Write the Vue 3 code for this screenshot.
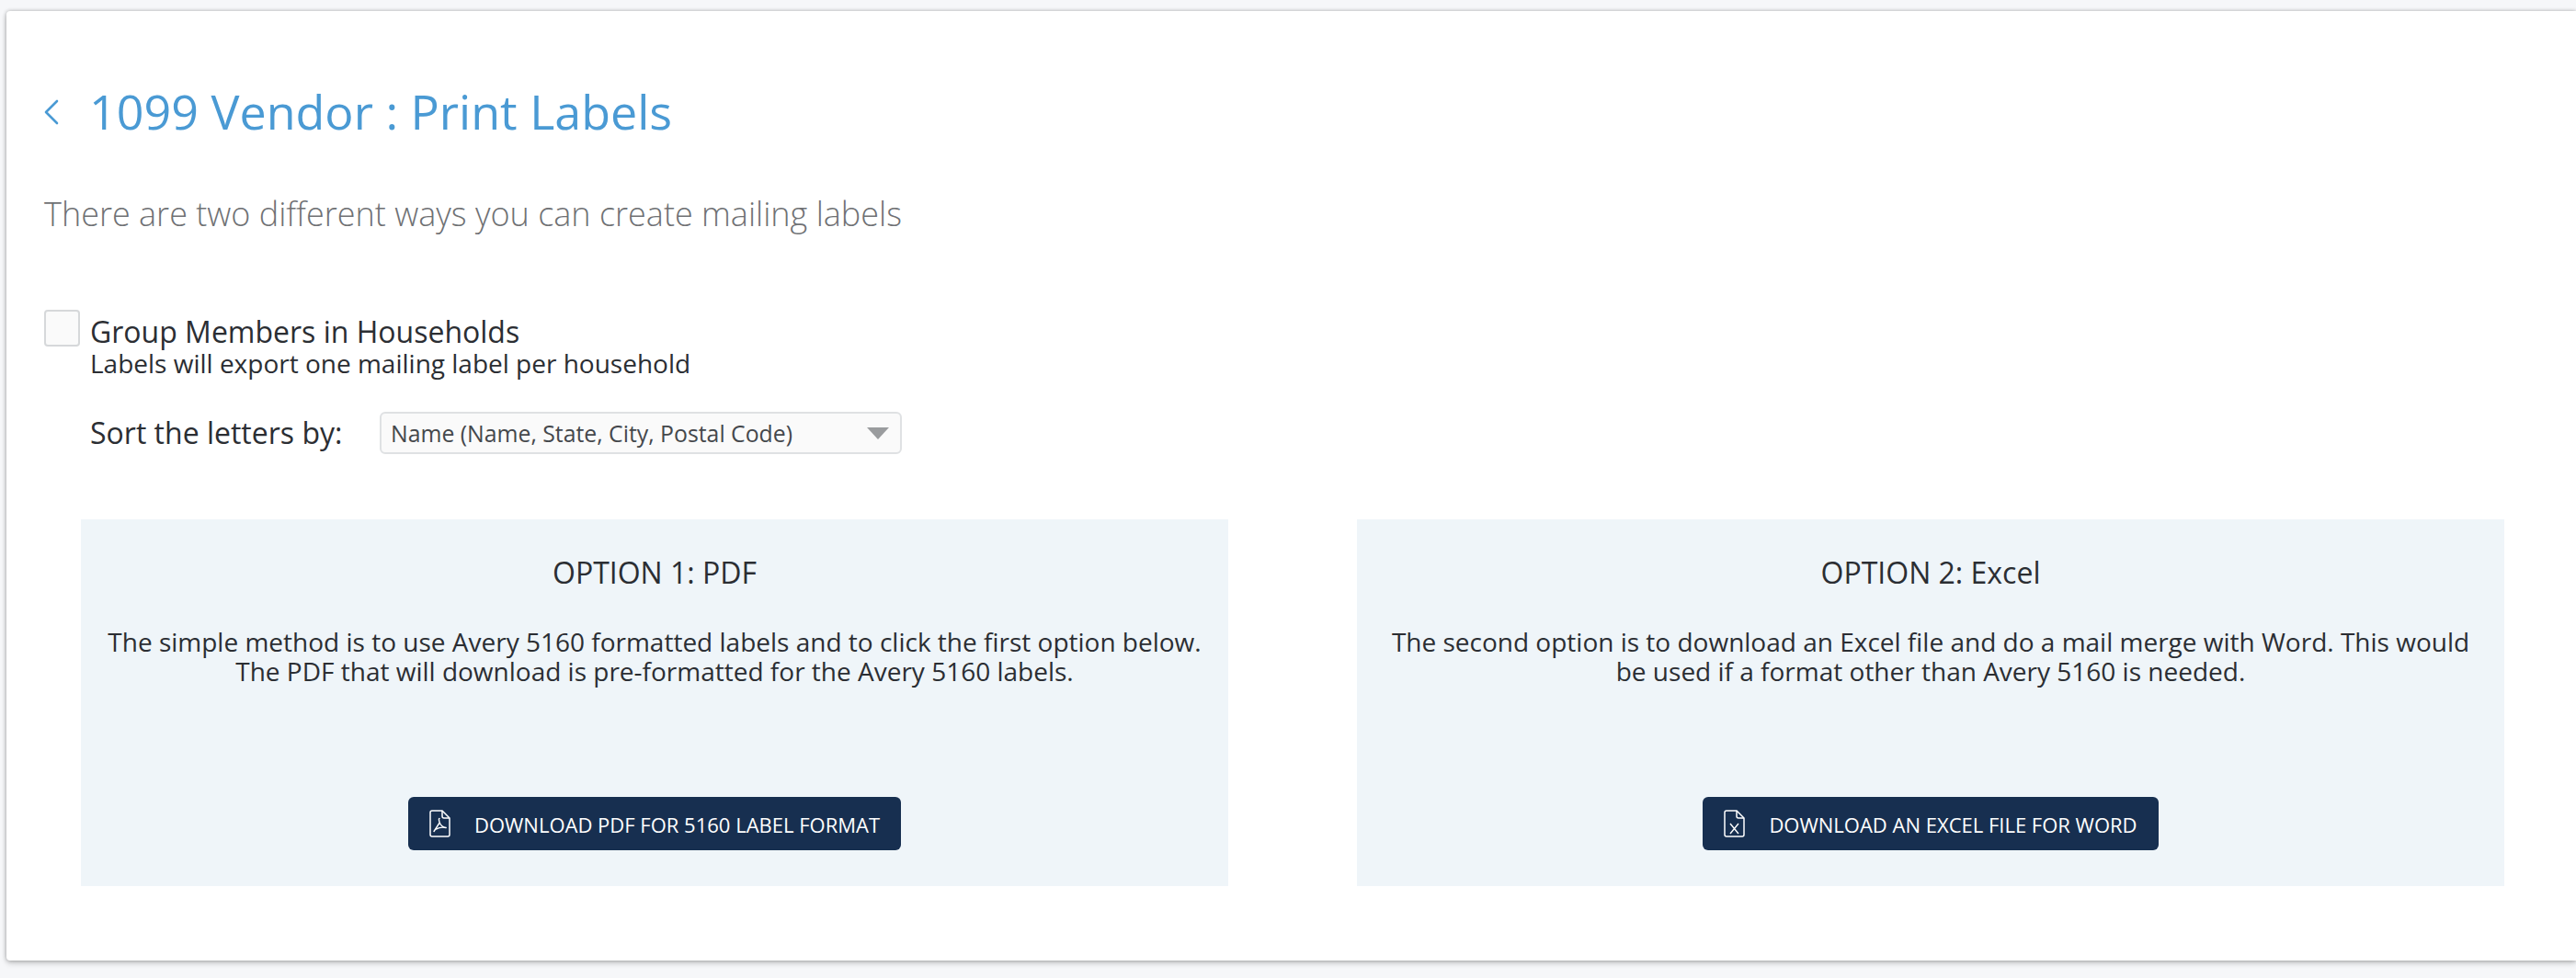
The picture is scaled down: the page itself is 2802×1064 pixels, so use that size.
<script setup>
const options = [
  {
    title: 'OPTION 1: PDF',
    lines: ['The simple method is to use Avery 5160 formatted labels and to click the first option below.', 'The PDF that will download is pre-formatted for the Avery 5160 labels.'],
    button: 'DOWNLOAD PDF FOR 5160 LABEL FORMAT',
    kind: 'pdf'
  },
  {
    title: 'OPTION 2: Excel',
    lines: ['The second option is to download an Excel file and do a mail merge with Word. This would', 'be used if a format other than Avery 5160 is needed.'],
    button: 'DOWNLOAD AN EXCEL FILE FOR WORD',
    kind: 'xls'
  }
]
</script>

<template>
  <div class="page">
    <main class="card">
      <header class="head">
        <svg class="back" viewBox="0 0 18 30" width="18" height="30" aria-hidden="true">
          <path d="M15 3 3 15l12 12" fill="none" stroke="currentColor" stroke-width="2.6" stroke-linecap="round" stroke-linejoin="round" />
        </svg>
        <h1 class="title">1099 Vendor : Print Labels</h1>
      </header>
      <p class="sub">There are two different ways you can create mailing labels</p>

      <div class="group">
        <span class="check"></span>
        <div class="group-text">
          <div class="group-title">Group Members in Households</div>
          <div class="group-desc">Labels will export one mailing label per household</div>
        </div>
      </div>

      <div class="sort">
        <span class="sort-label">Sort the letters by:</span>
        <div class="select">
          <span>Name (Name, State, City, Postal Code)</span>
          <i class="caret"></i>
        </div>
      </div>

      <div class="options">
        <section v-for="o in options" :key="o.kind" class="panel">
          <h2 class="panel-title">{{ o.title }}</h2>
          <p class="panel-text">
            <span v-for="l in o.lines" :key="l" class="line">{{ l }}</span>
          </p>
          <button class="btn" type="button">
            <svg class="file" viewBox="0 0 23 30" width="23" height="30" aria-hidden="true">
              <path d="M3 1h11l8 8v18a2 2 0 0 1-2 2H3a2 2 0 0 1-2-2V3a2 2 0 0 1 2-2Z" fill="none" stroke="currentColor" stroke-width="1.5" />
              <path d="M14 1v6a2 2 0 0 0 2 2h6" fill="none" stroke="currentColor" stroke-width="1.5" />
              <path v-if="o.kind === 'pdf'" d="M11 9.500c-.8 0-.7 2 .2 4.500l-6.200 9.500M11.200 14c1 2.500 3 4.800 7 5.500-3.500-.6-8.500.2-10.500 1.500" fill="none" stroke="currentColor" stroke-width="1.4" stroke-linecap="round" stroke-linejoin="round" />
              <path v-else d="m7 15 9 11M16 15 7 26" fill="none" stroke="currentColor" stroke-width="1.4" />
            </svg>
            <span class="btn-label">{{ o.button }}</span>
          </button>
        </section>
      </div>
    </main>
  </div>
</template>

<style>
html, body { margin: 0; background: #f6f7f9; }
</style>

<style scoped>
.page {
  width: 2802px;
  height: 1064px;
  padding: 12px 0 0 7px;
  box-sizing: border-box;
  overflow: hidden;
  font-family: "Open Sans", "Noto Sans", sans-serif;
  color: #2b2e33;
}
.card {
  height: 1033px;
  box-sizing: border-box;
  background: #fff;
  border-radius: 4px 0 0 4px;
  box-shadow: 0 0 4px rgba(0, 0, 0, .28), 0 3px 6px rgba(0, 0, 0, .18);
  padding: 76px 78px 0 41px;
}
.head {
  display: flex;
  align-items: center;
  color: #4a9ad4;
  height: 66px;
}
.back { margin-left: -1px; margin-right: 32px; flex: none; position: relative; top: 1px; }
.title { margin: 0; font-size: 52px; font-weight: 400; line-height: 66px; }
.sub {
  margin: 54px 0 0;
  font-size: 36px;
  line-height: 50px;
  font-weight: 300;
  color: #6f7174;
}
.group { display: flex; margin-top: 79px; }
.check {
  width: 39px;
  height: 40px;
  box-sizing: border-box;
  border: 2px solid #d6d8da;
  border-radius: 4px;
  background: #fafafa;
  flex: none;
  margin-right: 11px;
}
.group-title { font-size: 32px; line-height: 40px; margin-top: 4px; }
.group-desc { font-size: 28px; line-height: 35px; margin-top: -3px; }
.sort { display: flex; align-items: center; margin: 35px 0 0 50px; }
.sort-label { font-size: 32px; line-height: 46px; width: 315px; flex: none; }
.select {
  width: 568px;
  height: 46px;
  box-sizing: border-box;
  display: flex;
  align-items: center;
  justify-content: space-between;
  padding: 0 12px 0 10px;
  border: 2px solid #dfe1e3;
  border-radius: 6px;
  background: #fafafa;
  font-size: 24.8px;
  color: #45484c;
}
.caret {
  width: 0;
  height: 0;
  border-left: 12px solid transparent;
  border-right: 12px solid transparent;
  border-top: 13px solid #9a9c9e;
}
.options {
  display: grid;
  grid-template-columns: 1248px 1248px;
  gap: 140px;
  margin: 71px 0 0 40px;
}
.panel {
  height: 399px;
  box-sizing: border-box;
  background: #eff5f9;
  padding-top: 37px;
  display: flex;
  flex-direction: column;
  align-items: center;
  text-align: center;
}
.panel-title { margin: 0; font-size: 32px; font-weight: 400; line-height: 42px; }
.panel-text { margin: 38px 0 0; font-size: 28px; line-height: 32px; }
.line { display: block; white-space: nowrap; }
.btn {
  margin-top: auto;
  margin-bottom: 39px;
  height: 58px;
  display: flex;
  align-items: center;
  gap: 26px;
  padding: 0 23px;
  border: 0;
  border-radius: 6px;
  background: #172f50;
  color: #fff;
  font: 400 22px "Open Sans", sans-serif;
  white-space: nowrap;
}
.btn-label { padding-top: 2px; }
.file { flex: none; }
</style>
